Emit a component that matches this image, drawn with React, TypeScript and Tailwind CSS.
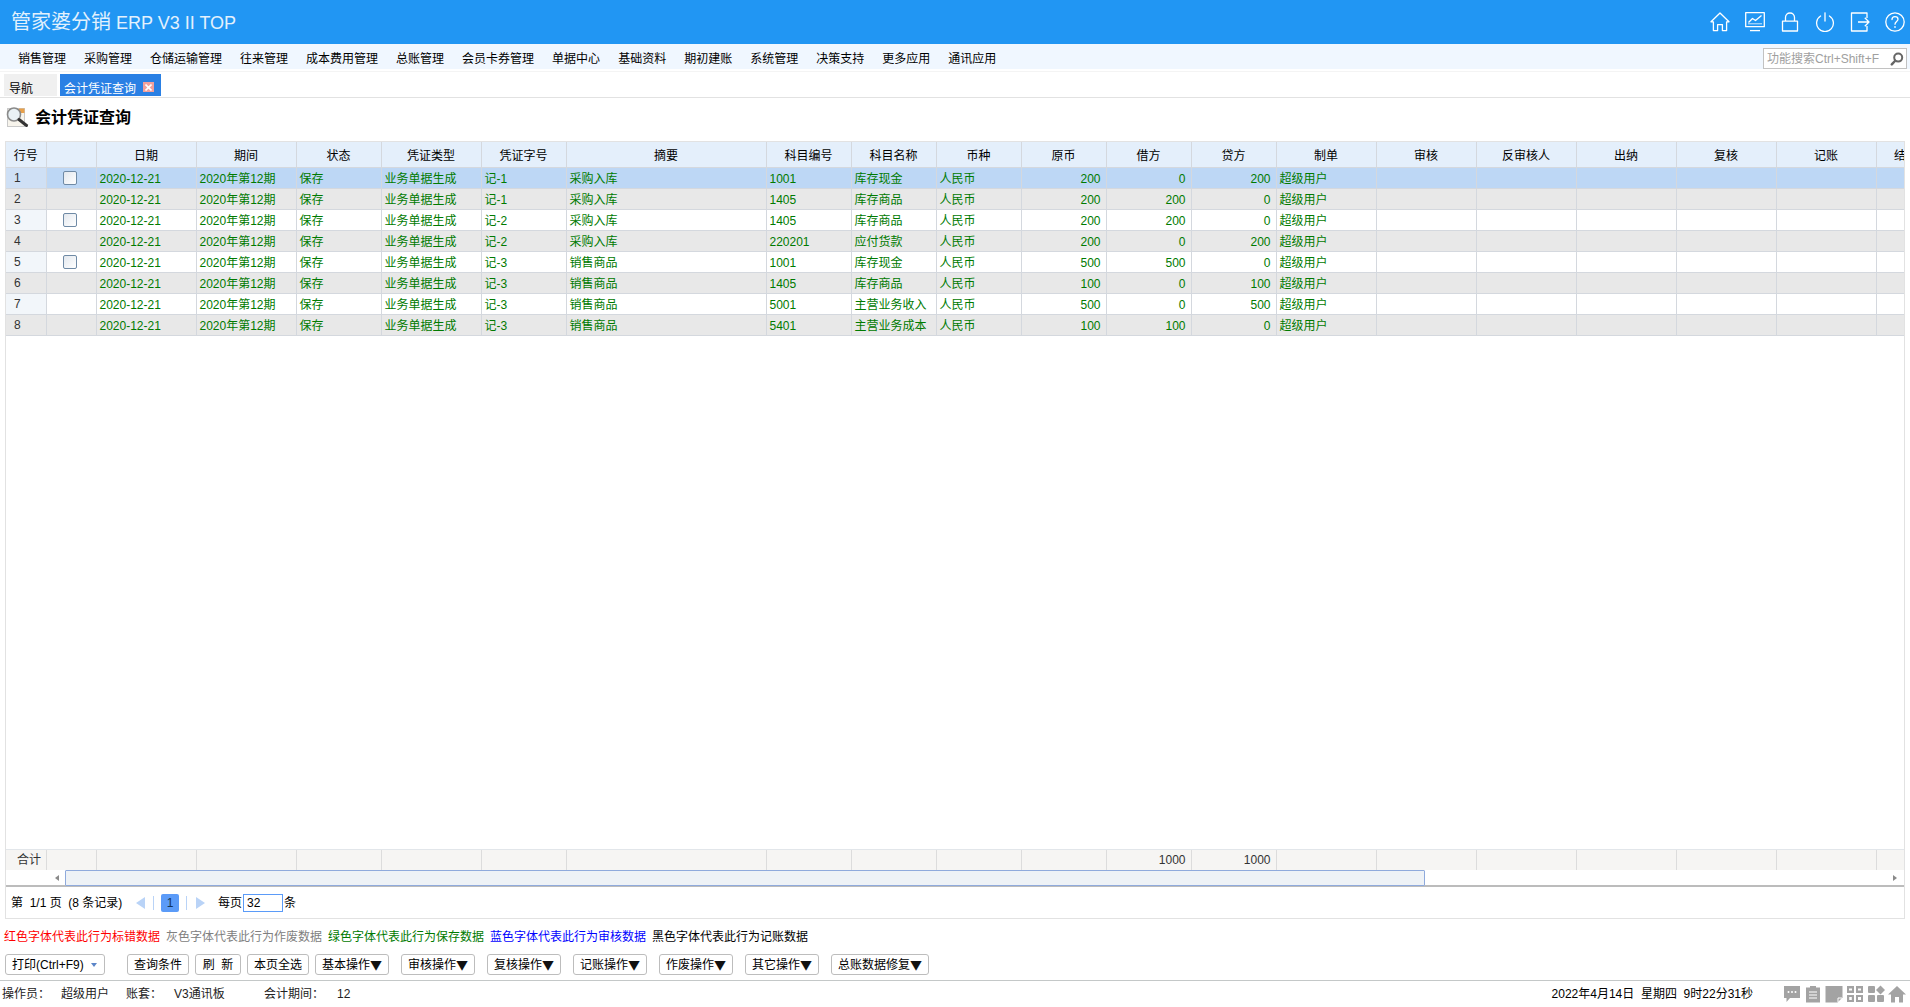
import React from 'react';

const columns = [
  { title: '行号', width: 40 },
  { title: '', width: 50 },
  { title: '日期', width: 100 },
  { title: '期间', width: 100 },
  { title: '状态', width: 85 },
  { title: '凭证类型', width: 100 },
  { title: '凭证字号', width: 85 },
  { title: '摘要', width: 200 },
  { title: '科目编号', width: 85 },
  { title: '科目名称', width: 85 },
  { title: '币种', width: 85 },
  { title: '原币', width: 85 },
  { title: '借方', width: 85 },
  { title: '贷方', width: 85 },
  { title: '制单', width: 100 },
  { title: '审核', width: 100 },
  { title: '反审核人', width: 100 },
  { title: '出纳', width: 100 },
  { title: '复核', width: 100 },
  { title: '记账', width: 100 },
  { title: '结账', width: 60 },
];

const rows = [
  { no: 1, check: true, num: '记-1', memo: '采购入库', code: '1001', name: '库存现金', orig: 200, debit: 0, credit: 200 },
  { no: 2, check: false, num: '记-1', memo: '采购入库', code: '1405', name: '库存商品', orig: 200, debit: 200, credit: 0 },
  { no: 3, check: true, num: '记-2', memo: '采购入库', code: '1405', name: '库存商品', orig: 200, debit: 200, credit: 0 },
  { no: 4, check: false, num: '记-2', memo: '采购入库', code: '220201', name: '应付货款', orig: 200, debit: 0, credit: 200 },
  { no: 5, check: true, num: '记-3', memo: '销售商品', code: '1001', name: '库存现金', orig: 500, debit: 500, credit: 0 },
  { no: 6, check: false, num: '记-3', memo: '销售商品', code: '1405', name: '库存商品', orig: 100, debit: 0, credit: 100 },
  { no: 7, check: false, num: '记-3', memo: '销售商品', code: '5001', name: '主营业务收入', orig: 500, debit: 0, credit: 500 },
  { no: 8, check: false, num: '记-3', memo: '销售商品', code: '5401', name: '主营业务成本', orig: 100, debit: 100, credit: 0 },
];

const menus = [
  '销售管理', '采购管理', '仓储运输管理', '往来管理', '成本费用管理', '总账管理', '会员卡券管理',
  '单据中心', '基础资料', '期初建账', '系统管理', '决策支持', '更多应用', '通讯应用',
];

const legend = [
  { text: '红色字体代表此行为标错数据', color: 'text-[#ff0000]' },
  { text: '灰色字体代表此行为作废数据', color: 'text-[#808080]' },
  { text: '绿色字体代表此行为保存数据', color: 'text-[#007a00]' },
  { text: '蓝色字体代表此行为审核数据', color: 'text-[#0000ff]' },
  { text: '黑色字体代表此行为记账数据', color: 'text-black' },
];

const Colgroup = () => (
  <colgroup>
    {columns.map((c, i) => (
      <col key={i} style={{ width: c.width }} />
    ))}
  </colgroup>
);

function TopIcons() {
  return (
    <div className="flex items-center gap-[15px] text-white">
      {/* home */}
      <svg width="20" height="20" viewBox="0 0 20 20" fill="none" stroke="currentColor" strokeWidth="1.3" strokeLinejoin="round">
        <path d="M10 1 L1 9.8 L3.4 9.8 L3.4 18.6 L7.6 18.6 L7.6 12.6 L12.4 12.6 L12.4 18.6 L16.6 18.6 L16.6 9.8 L19 9.8 Z" />
      </svg>
      {/* monitor with chart */}
      <svg width="20" height="20" viewBox="0 0 20 20" fill="none" stroke="currentColor" strokeWidth="1.3" strokeLinejoin="round">
        <path d="M0.7 0.7 H19.3 V14.7 H0.7 Z" />
        <path d="M3.5 10.5 L7.5 6.5 L10.5 8.5 L16.5 3.5" />
        <path d="M3 11.8 H17" strokeWidth="0.8" />
        <path d="M5 18.6 H15" />
      </svg>
      {/* lock */}
      <svg width="20" height="20" viewBox="0 0 20 20" fill="none" stroke="currentColor" strokeWidth="1.3" strokeLinejoin="round">
        <path d="M2.5 9.2 H17.5 V19 H2.5 Z" />
        <path d="M5.5 9 V5.5 C5.5 2.8 7.5 1 10 1 C12.5 1 14.5 2.8 14.5 5.5 V9" />
      </svg>
      {/* power */}
      <svg width="20" height="20" viewBox="0 0 20 20" fill="none" stroke="currentColor" strokeWidth="1.3" strokeLinecap="round">
        <path d="M5.6 4 A8.4 8.4 0 1 0 14.4 4" />
        <path d="M10 0.8 V9" />
      </svg>
      {/* exit */}
      <svg width="20" height="20" viewBox="0 0 20 20" fill="none" stroke="currentColor" strokeWidth="1.3" strokeLinejoin="round">
        <path d="M17 6 V1 H1.5 V19 H17 V14" />
        <path d="M8 10 H19 M14.8 5.8 L19 10 L14.8 14.2" />
      </svg>
      {/* help */}
      <svg width="20" height="20" viewBox="0 0 20 20" fill="none" stroke="currentColor" strokeWidth="1.3" strokeLinecap="round">
        <circle cx="10" cy="10" r="9.2" />
        <path d="M7 7.6 C7 5.6 8.4 4.6 10 4.6 C11.8 4.6 13 5.8 13 7.2 C13 9.4 10 9.6 10 12.2" />
        <path d="M10 14.6 V15.4" />
      </svg>
    </div>
  );
}

function BottomIcons() {
  return (
    <div className="flex items-center gap-[3px] text-[#a3a3a3]">
      <svg width="18" height="18" viewBox="0 0 18 18" fill="currentColor">
        <path d="M1 1 H17 V13 H7 L3.5 17 V13 H1 Z" />
        <circle cx="5.5" cy="7" r="1" fill="#fff" />
        <circle cx="9" cy="7" r="1" fill="#fff" />
        <circle cx="12.5" cy="7" r="1" fill="#fff" />
      </svg>
      <svg width="18" height="18" viewBox="0 0 18 18" fill="currentColor">
        <path d="M2 2.5 H6 V1 H12 V2.5 H16 V17.5 H2 Z" />
        <path d="M5 7 H13 M5 10 H13 M5 13 H13" stroke="#fff" strokeWidth="1.2" />
      </svg>
      <svg width="18" height="18" viewBox="0 0 18 18" fill="currentColor">
        <path d="M0.5 1 H17.5 V12.5 L12.5 17.5 H0.5 Z" />
        <path d="M13 17 V13 H17" stroke="#fff" strokeWidth="1" fill="none" />
      </svg>
      <svg width="18" height="18" viewBox="0 0 18 18" fill="currentColor">
        <path fillRule="evenodd" d="M1 1 H8 V8 H1 Z M3 3.5 V5.5 H6 V3.5 Z M10 1 H17 V8 H10 Z M12 3.5 V5.5 H15 V3.5 Z M1 10 H8 V17 H1 Z M3.2 12 V15 H5.8 V12 Z M10 10 H17 V17 H10 Z M12 12 V15 H15 V12 Z" />
      </svg>
      <svg width="18" height="18" viewBox="0 0 18 18" fill="currentColor">
        <rect x="1" y="1" width="7" height="7" rx="1" />
        <path d="M13.5 0.5 L18 5 L13.5 9.5 L9 5 Z" />
        <rect x="1" y="10" width="7" height="7" rx="1" />
        <rect x="10" y="10" width="7" height="7" rx="1" />
      </svg>
      <svg width="18" height="18" viewBox="0 0 18 18" fill="currentColor">
        <path d="M9 1 L18 9.5 H15 V17.5 H11 V12 H7 V17.5 H3 V9.5 H0 Z" />
      </svg>
    </div>
  );
}

function DocSearchIcon() {
  return (
    <svg width="24" height="21" viewBox="0 0 24 21" fill="none">
      <rect x="2.5" y="1.5" width="17" height="18" fill="#f7f4ec" stroke="#c9c9c9" />
      <rect x="14" y="1.5" width="5.5" height="4.5" fill="#e8a04a" />
      <circle cx="9" cy="7.5" r="6.5" fill="#e9f1f5" stroke="#8a8a8a" strokeWidth="1.6" />
      <path d="M14 12.5 L21.5 18.5" stroke="#333" strokeWidth="3" strokeLinecap="round" />
    </svg>
  );
}

function ToolButton({ width, arrow, children }: { width: string; arrow?: boolean; children: React.ReactNode }) {
  return (
    <button className={`flex h-[21px] ${width} shrink-0 items-center justify-center whitespace-pre rounded-[3px] border border-[#bdbdbd] bg-white pt-px text-[12px] leading-[18px] text-black`}>
      {children}
      {arrow && <span className="font-['Noto_Sans_CJK_JP'] text-[12px] leading-[18px] text-[#111]">▼</span>}
    </button>
  );
}

export default function App() {
  return (
    <div
      className="flex h-screen w-full flex-col overflow-hidden bg-white text-[12px] text-black"
      style={{ fontFamily: '"Liberation Sans", "Noto Sans CJK SC", sans-serif' }}
    >
      {/* Top bar */}
      <header className="flex h-[44px] shrink-0 items-center justify-between bg-[#2196f3] pl-[11px] pr-[5px]">
        <div className="text-[18px] text-[#e3f1fd]">
          <span className="text-[20px]">管家婆分销</span> ERP V3 II TOP
        </div>
        <TopIcons />
      </header>

      {/* Menu */}
      <nav className="flex h-[25px] shrink-0 items-start justify-between bg-[#f0f7ff] pl-[9px] pr-[3px]">
        <div className="flex pt-[6px]">
          {menus.map((m) => (
            <span key={m} className="px-[9px] text-[12px] leading-[18px] text-black">
              {m}
            </span>
          ))}
        </div>
        <div className="mt-[4px] flex h-[21px] w-[144px] items-center justify-between border border-[#c2c2c2] bg-white pl-[3px] pr-[2px] text-[12px] text-[#a0a0a0]">
          <span>功能搜索Ctrl+Shift+F</span>
          <svg width="14" height="14" viewBox="0 0 14 14" fill="none" stroke="#666" strokeWidth="2">
            <circle cx="8.2" cy="5.6" r="4" />
            <path d="M5.2 8.8 L1.8 12.4" strokeWidth="2.4" strokeLinecap="round" />
          </svg>
        </div>
      </nav>

      {/* Tabs */}
      <div className="mt-[2px] flex h-[27px] shrink-0 items-start gap-[3px] border-t border-b border-t-[#f4f4f4] border-b-[#e2e2e2] pl-[4px] pt-[2px]">
        <div className="h-[22px] w-[53px] bg-[#f0f0f0] pl-[5px] pt-[8px] leading-[15px] text-black">导航</div>
        <div className="flex h-[22px] w-[101px] items-start bg-[#2a80e4] pl-[4px] pt-[8px] leading-[15px] text-white">
          <span>会计凭证查询</span>
          <span className="ml-[7px] flex h-[10px] w-[11px] items-center justify-center bg-[#f2a09c]">
            <svg width="7" height="7" viewBox="0 0 7 7" stroke="#fff" strokeWidth="1.6">
              <path d="M0.5 0.5 L6.5 6.5 M6.5 0.5 L0.5 6.5" />
            </svg>
          </span>
        </div>
      </div>

      {/* Page title */}
      <div className="flex h-[43px] shrink-0 items-center gap-[6px] pb-[4px] pl-[5px]">
        <DocSearchIcon />
        <span className="text-[16px] font-bold text-black">会计凭证查询</span>
      </div>

      {/* Grid panel */}
      <div className="ml-[5px] mr-[5px] flex h-[778px] shrink-0 flex-col overflow-hidden border border-[#e2e2e2]">
        <div className="flex-1 overflow-hidden">
          <table className="table-fixed border-collapse" style={{ width: 1870 }}>
            <Colgroup />
            <thead>
              <tr className="h-[25px] bg-[#e4effb]">
                {columns.map((c, i) => (
                  <th key={i} className="border-r border-b border-[#d4d8de] p-0 pt-[4px] text-center font-normal leading-[18px] text-black">
                    {c.title}
                  </th>
                ))}
              </tr>
            </thead>
            <tbody>
              {rows.map((r) => {
                const rowBg = r.no === 1 ? 'bg-[#bdd7f5]' : r.no % 2 === 0 ? 'bg-[#e8e8e8]' : 'bg-white';
                const noBg = r.no === 1 ? 'bg-[#cfe0f5]' : r.no % 2 === 0 ? 'bg-[#e8e8e8]' : 'bg-[#f2f6fa]';
                const cell = 'border-r border-b border-[#d4d8de] p-0 pl-[3px] pt-[2px] leading-[18px] whitespace-nowrap overflow-hidden text-[#007a00]';
                const num = 'border-r border-b border-[#d4d8de] p-0 pr-[5px] pt-[2px] leading-[18px] text-right text-[#007a00]';
                return (
                  <tr key={r.no} className={`h-[21px] ${rowBg}`}>
                    <td className={`border-r border-b border-[#d4d8de] p-0 pl-[8px] pt-px leading-[18px] text-[#333] ${noBg}`}>{r.no}</td>
                    <td className="border-r border-b border-[#d4d8de] p-0">
                      {r.check && (
                        <div className="ml-[16px] h-[14px] w-[14px] rounded-[2px] border border-[#6f8aa5] bg-gradient-to-br from-[#e3e8ee] to-white" />
                      )}
                    </td>
                    <td className={cell}>2020-12-21</td>
                    <td className={cell}>2020年第12期</td>
                    <td className={cell}>保存</td>
                    <td className={cell}>业务单据生成</td>
                    <td className={cell}>{r.num}</td>
                    <td className={cell}>{r.memo}</td>
                    <td className={cell}>{r.code}</td>
                    <td className={cell}>{r.name}</td>
                    <td className={cell}>人民币</td>
                    <td className={num}>{r.orig}</td>
                    <td className={num}>{r.debit}</td>
                    <td className={num}>{r.credit}</td>
                    <td className={cell}>超级用户</td>
                    {columns.slice(15).map((c) => (
                      <td key={c.title} className="border-r border-b border-[#d4d8de] p-0" />
                    ))}
                  </tr>
                );
              })}
            </tbody>
          </table>
        </div>

        {/* Totals */}
        <div className="shrink-0 overflow-hidden border-t border-[#e2e6ea]">
          <table className="table-fixed border-collapse" style={{ width: 1870 }}>
            <Colgroup />
            <tbody>
              <tr className="h-[20px] bg-[#f6f5f3] text-[#333]">
                {columns.map((c, i) => (
                  <td key={i} className={`border-r border-[#dcdcdc] p-0 ${i === 0 ? 'pl-[11px] text-left' : 'pr-[5px] text-right'}`}>
                    {i === 0 ? '合计' : i === 12 || i === 13 ? '1000' : ''}
                  </td>
                ))}
              </tr>
            </tbody>
          </table>
        </div>

        {/* Horizontal scrollbar */}
        <div className="mt-[1px] flex h-[16px] shrink-0 items-center border-b-2 border-[#bcbcbc] pl-[42px]">
          <div className="flex h-[15px] w-[17px] shrink-0 items-center justify-center">
            <div className="h-0 w-0 border-y-[3px] border-r-[4px] border-y-transparent border-r-[#8a8a8a]" />
          </div>
          <div className="h-[16px] w-[1360px] shrink-0 rounded-[1px] border border-[#8faadc] bg-[#eef2f6]" />
          <div className="flex flex-1 items-center justify-end pr-[7px]">
            <div className="h-0 w-0 border-y-[3px] border-l-[4px] border-y-transparent border-l-[#8a8a8a]" />
          </div>
        </div>

        {/* Pager */}
        <div className="flex h-[31px] shrink-0 items-center pl-[5px] text-black">
          <span className="w-[125px] whitespace-pre">第  1/1 页  (8 条记录)</span>
          <div className="h-0 w-0 border-y-[6px] border-r-[9px] border-y-transparent border-r-[#b9d3f7]" />
          <div className="ml-[8px] h-[14px] w-px bg-[#b9d3f7]" />
          <div className="ml-[7px] flex h-[18px] w-[18px] items-center justify-center rounded-[2px] bg-[#5b9bf8] text-[#12345a]">1</div>
          <div className="ml-[7px] h-[14px] w-px bg-[#b9d3f7]" />
          <div className="ml-[9px] h-0 w-0 border-y-[6px] border-l-[9px] border-y-transparent border-l-[#b9d3f7]" />
          <span className="ml-[13px]">每页</span>
          <div className="ml-px flex h-[18px] w-[40px] items-center border border-[#5b9bf8] pl-[3px]">32</div>
          <span className="ml-px">条</span>
        </div>
      </div>

      {/* Legend */}
      <div className="mt-[9px] flex h-[17px] shrink-0 items-center gap-[6px] pl-[4px]">
        {legend.map((l) => (
          <span key={l.text} className={l.color}>
            {l.text}
          </span>
        ))}
      </div>

      {/* Actions */}
      <div className="mt-[9px] flex h-[21px] shrink-0 items-center pl-[5px]">
        <button className="flex h-[21px] w-[100px] items-center justify-between rounded-[3px] border border-[#bdbdbd] bg-white pl-[6px] pr-[7px] text-[12px]">
          <span>打印(Ctrl+F9)</span>
          <span className="h-0 w-0 border-x-[3px] border-t-[4px] border-x-transparent border-t-[#5b85c8]" />
        </button>
        <div className="ml-[22px] flex gap-[6px]">
          <ToolButton width="w-[62px]">查询条件</ToolButton>
          <ToolButton width="w-[46px]">刷  新</ToolButton>
          <ToolButton width="w-[62px]">本页全选</ToolButton>
          <ToolButton width="w-[74px]" arrow>基本操作</ToolButton>
        </div>
        <div className="ml-[12px] flex gap-[12px]">
          <ToolButton width="w-[74px]" arrow>审核操作</ToolButton>
          <ToolButton width="w-[74px]" arrow>复核操作</ToolButton>
          <ToolButton width="w-[74px]" arrow>记账操作</ToolButton>
          <ToolButton width="w-[74px]" arrow>作废操作</ToolButton>
          <ToolButton width="w-[74px]" arrow>其它操作</ToolButton>
          <ToolButton width="w-[98px]" arrow>总账数据修复</ToolButton>
        </div>
      </div>

      {/* Status bar */}
      <footer className="mt-[5px] flex flex-1 items-center justify-between border-t border-[#c4c8c8] pl-[2px] pr-[4px] text-[#222]">
        <div className="flex items-center">
          <span className="w-[59px]">操作员：</span>
          <span className="w-[65px]">超级用户</span>
          <span className="w-[48px]">账套：</span>
          <span className="w-[90px]">V3通讯板</span>
          <span className="w-[73px]">会计期间：</span>
          <span>12</span>
        </div>
        <div className="flex items-center gap-[30px]">
          <span className="whitespace-pre text-black">2022年4月14日  星期四  9时22分31秒</span>
          <BottomIcons />
        </div>
      </footer>
    </div>
  );
}
